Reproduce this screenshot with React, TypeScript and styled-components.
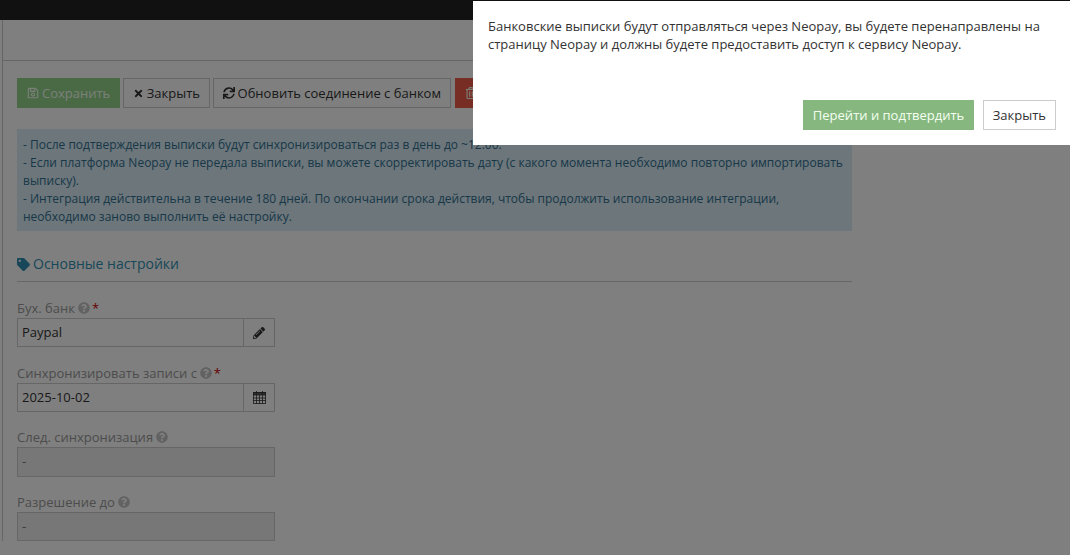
import * as React from 'react'
import styled, { createGlobalStyle } from 'styled-components'
import { FaRegSave, FaTimes, FaSync, FaRegTrashAlt, FaTag, FaQuestionCircle, FaPencilAlt } from 'react-icons/fa'

const GlobalStyle = createGlobalStyle`
  html, body {
    margin: 0;
    height: 100%;
    overflow: hidden;
    background: #fff;
    color: #333;
    font-family: "Open Sans", "Liberation Sans", sans-serif;
    font-size: 13px;
    line-height: 18px;
  }
  * {
    box-sizing: border-box;
  }
`

const TopBar = styled.div`
  height: 20px;
  background: #222;
`

const Main = styled.div`
  margin-left: 2px;
  border-left: 1px solid #ccc;
`

const PageHeader = styled.div`
  height: 41px;
  border-bottom: 1px solid #ccc;
`

const Body = styled.div`
  width: 849px;
  padding: 17px 0 0 14px;
`

const Toolbar = styled.div`
  display: flex;
  gap: 2.5px;
  white-space: nowrap;
`

const Button = styled.button<{ $variant?: 'success' | 'danger' }>`
  display: inline-flex;
  align-items: center;
  gap: 3px;
  height: 30px;
  padding: 0 9px;
  border: 1px solid ${(p) => (p.$variant === 'success' ? '#94d48c' : p.$variant === 'danger' ? '#ee5a46' : '#ccc')};
  background: ${(p) => (p.$variant === 'success' ? '#94d48c' : p.$variant === 'danger' ? '#ee5a46' : '#fff')};
  color: ${(p) => (p.$variant ? '#f4fff0' : '#333')};
  font: inherit;
  font-size: 13px;
  ${(p) => p.$variant === 'danger' && 'margin-left: 1.5px;'}
`

const InfoBox = styled.div`
  margin-top: 21px;
  padding: 6.5px 6px 5.5px;
  background: #d9edf7;
  color: #31708f;
  font-size: 12px;
`

const SectionTitle = styled.h4`
  display: flex;
  align-items: center;
  gap: 3px;
  margin: 24px 0 0;
  padding-bottom: 8px;
  border-bottom: 1px solid #ccc;
  color: #2f8fb0;
  font-size: 14px;
  font-weight: 400;
  line-height: 18px;
`

const FieldList = styled.div`
  display: flex;
  flex-direction: column;
  gap: 16.33px;
  width: 258px;
  margin-top: 17px;
`

const Field = styled.div`
  display: flex;
  flex-direction: column;
  gap: 1px;
`

const Label = styled.label`
  display: flex;
  align-items: center;
  gap: 3px;
  height: 18px;
  color: #999;
  white-space: nowrap;
  svg {
    font-size: 12px;
    color: #c4c4c4;
  }
`

const Required = styled.span`
  margin-left: -1px;
  color: #c00;
`

const InputGroup = styled.div`
  display: flex;
  height: 29.33px;
`

const Input = styled.div<{ $disabled?: boolean }>`
  flex: 1;
  padding: 4px;
  border: 1px solid #ccc;
  background: ${(p) => (p.$disabled ? '#eee' : '#fff')};
  color: ${(p) => (p.$disabled ? '#777' : '#333')};
`

const Addon = styled.div`
  display: flex;
  align-items: center;
  justify-content: center;
  width: 31px;
  border: 1px solid #ccc;
  border-left: 0;
`

const Backdrop = styled.div`
  position: fixed;
  inset: 0;
  background: rgba(0, 0, 0, 0.5);
`

const Modal = styled.div`
  position: fixed;
  top: 1px;
  right: 0;
  display: flex;
  flex-direction: column;
  width: 597px;
  height: 144px;
  padding: 16px 14px 15px 15px;
  background: #fff;
`

const ModalText = styled.div`
  flex: 1;
`

const ModalActions = styled.div`
  display: flex;
  justify-content: flex-end;
  gap: 9px;
`

const ConfirmButton = styled(Button)`
  padding: 0 8.5px;
  background: #86b77f;
  border-color: #86b77f;
`

// иконка календаря с сеткой
const CalendarIcon = () => (
  <svg width="13" height="13" viewBox="0 0 13 13" fill="none" stroke="#333" strokeOpacity="0.8" strokeWidth="1">
    <rect x="0.5" y="1.5" width="12" height="11" />
    <rect x="0.5" y="1.5" width="12" height="2.5" fill="#333" fillOpacity="0.8" />
    <path d="M3.5 0v3M9.5 0v3M0 7h13M0 9.5h13M3.5 4v9M6.5 4v9M9.5 4v9" />
  </svg>
)

const App: React.FC = () => {
  return (
    <>
      <GlobalStyle />
      <TopBar />
      <Main>
        <PageHeader />
        <Body>
          <Toolbar>
            <Button $variant="success"><FaRegSave size={12} /> Сохранить</Button>
            <Button><FaTimes size={11} /> Закрыть</Button>
            <Button><FaSync size={12} /> Обновить соединение с банком</Button>
            <Button $variant="danger"><FaRegTrashAlt size={12} /> Удалить</Button>
          </Toolbar>
          <InfoBox>
            - После подтверждения выписки будут синхронизироваться раз в день до ~12:00.
            <br />
            - Если платформа Neopay не передала выписки, вы можете скорректировать дату (с какого момента необходимо повторно импортировать выписку).
            <br />
            - Интеграция действительна в течение 180 дней. По окончании срока действия, чтобы продолжить использование интеграции, необходимо заново выполнить её настройку.
          </InfoBox>
          <SectionTitle><FaTag size={13} /> Основные настройки</SectionTitle>
          <FieldList>
            <Field>
              <Label>Бух. банк <FaQuestionCircle /> <Required>*</Required></Label>
              <InputGroup>
                <Input>Paypal</Input>
                <Addon><FaPencilAlt size={12} /></Addon>
              </InputGroup>
            </Field>
            <Field>
              <Label>Синхронизировать записи с <FaQuestionCircle /> <Required>*</Required></Label>
              <InputGroup>
                <Input>2025-10-02</Input>
                <Addon><CalendarIcon /></Addon>
              </InputGroup>
            </Field>
            <Field>
              <Label>След. синхронизация <FaQuestionCircle /></Label>
              <InputGroup>
                <Input $disabled>-</Input>
              </InputGroup>
            </Field>
            <Field>
              <Label>Разрешение до <FaQuestionCircle /></Label>
              <InputGroup>
                <Input $disabled>-</Input>
              </InputGroup>
            </Field>
          </FieldList>
        </Body>
      </Main>
      <Backdrop />
      <Modal>
        <ModalText>
          Банковские выписки будут отправляться через Neopay, вы будете перенаправлены на страницу Neopay и должны будете предоставить доступ к сервису Neopay.
        </ModalText>
        <ModalActions>
          <ConfirmButton $variant="success">Перейти и подтвердить</ConfirmButton>
          <Button>Закрыть</Button>
        </ModalActions>
      </Modal>
    </>
  )
}

export default App
